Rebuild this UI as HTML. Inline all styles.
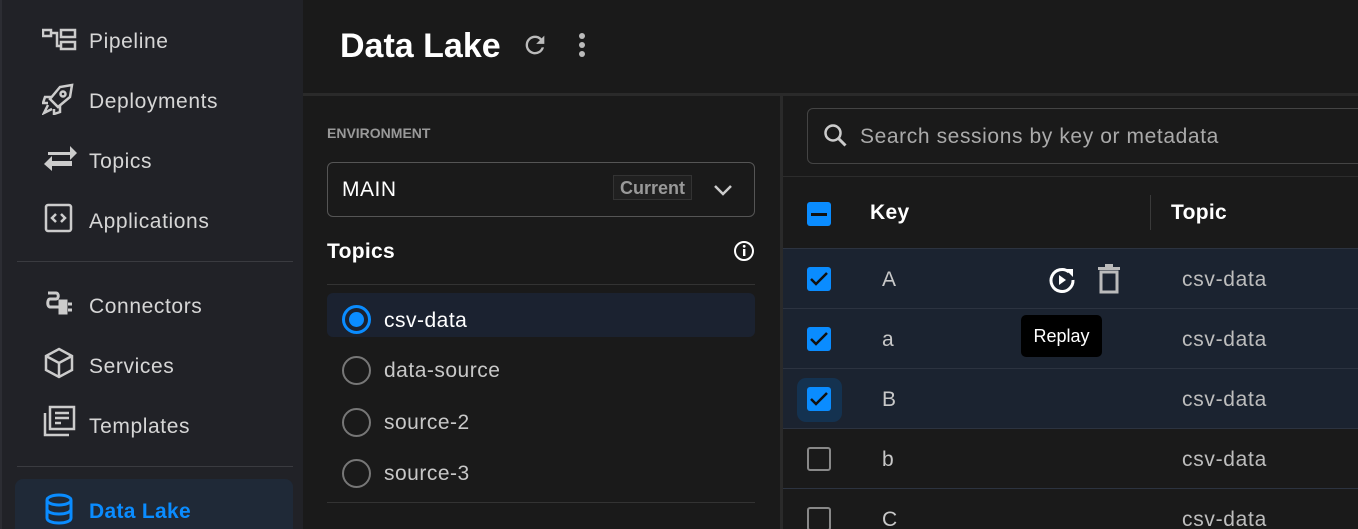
<!DOCTYPE html>
<html><head><style>
*{margin:0;padding:0;box-sizing:border-box}
html{overflow:hidden;width:1358px;height:529px}
body{width:1358px;height:529px;overflow:hidden;background:#1a1a1a;font-family:"Liberation Sans",sans-serif;position:relative;color:#ddd}
.a{position:absolute}
.side{left:0;top:0;width:303px;height:529px;background:#212227;border-left:2px solid #2c2d33}
.nav{position:absolute;left:87px;font-size:21px;letter-spacing:.6px;color:#d6d6d6;line-height:24px;margin-top:2px}
.ic{position:absolute;left:40px}
.sep{position:absolute;left:15px;width:276px;height:1px;background:#3a3b40}
.radio{position:absolute;left:342px;width:29px;height:29px;border-radius:50%;border:2.5px solid #777}
.rt{position:absolute;left:384px;font-size:21px;letter-spacing:.5px;color:#c8c8c8;line-height:24px;margin-top:1px}
.cb{position:absolute;left:807px;width:24px;height:24px;border-radius:3px}
.cb.on{background:#0a8cff}
.cb.off{border:2.5px solid #888;width:24px;height:24px}
.row{position:absolute;left:783px;width:575px;height:60px;border-bottom:1px solid #2c3340}
.k{position:absolute;left:882px;font-size:21px;color:#c8c8c8;margin-top:1px}
.t{position:absolute;left:1182px;font-size:21px;letter-spacing:.7px;color:#bdbdbd;margin-top:1px}
</style></head><body>
<div class="a side">
 <svg class="ic" style="top:28px" width="36" height="24" viewBox="0 0 36 24" fill="none" stroke="#ccc" stroke-width="2.5"><rect x="1" y="2" width="8" height="6"/><rect x="19" y="2" width="14" height="7"/><rect x="19" y="14" width="14" height="7"/><path d="M9 5h6v13h4"/></svg>
 <div class="nav" style="top:28px">Pipeline</div>
 <svg class="ic" style="top:83px" width="34" height="32" viewBox="0 0 34 32" fill="none" stroke="#ccc" stroke-width="2.5"><path d="M30 2 L18 4 L8 16 L16 24 L28 14 Z"/><circle cx="21" cy="11" r="2.5"/><path d="M10 14 L3 14 L1 20 L6 20"/><path d="M18 22 L18 29 L12 31 L12 26"/><path d="M6 22 L2 30 L10 26"/></svg>
 <div class="nav" style="top:88px">Deployments</div>
 <svg class="ic" style="top:144px" width="36" height="28" viewBox="0 0 36 28" fill="#ccc"><path d="M6 8h22v-6l7 7-7 7v-5H6z"/><path d="M30 17H10v-5l-8 8 8 7v-5h20z"/></svg>
 <div class="nav" style="top:148px">Topics</div>
 <svg class="ic" style="top:203px" width="32" height="30" viewBox="0 0 32 30" fill="none" stroke="#ccc" stroke-width="2.5"><rect x="4" y="2" width="25" height="26" rx="2"/><path d="M14 11l-4 4 4 4M19 11l4 4-4 4"/></svg>
 <div class="nav" style="top:208px">Applications</div>
 <div class="sep" style="top:261px"></div>
 <svg class="ic" style="top:289px" width="32" height="28" viewBox="0 0 32 28" fill="none" stroke="#ccc" stroke-width="3"><path d="M6 4h8c3 0 3 6 0 6H8c-3 0-3 8 0 8h10"/><rect x="18" y="12" width="6" height="12" fill="#ccc"/><path d="M26 15h4M26 21h4"/></svg>
 <div class="nav" style="top:293px">Connectors</div>
 <svg class="ic" style="top:347px" width="32" height="32" viewBox="0 0 32 32" fill="none" stroke="#ccc" stroke-width="2.5"><path d="M17 2L30 9v14L17 30 4 23V9z"/><path d="M4 9l13 7 13-7M17 16v14"/></svg>
 <div class="nav" style="top:353px">Services</div>
 <svg class="ic" style="top:405px" width="34" height="32" viewBox="0 0 34 32" fill="none" stroke="#ccc" stroke-width="2.5"><rect x="8" y="2" width="24" height="22"/><path d="M3 8v22h24"/><path d="M13 8h14M13 13h14M13 18h6"/></svg>
 <div class="nav" style="top:413px">Templates</div>
 <div class="sep" style="top:466px"></div>
 <div class="a" style="left:13px;top:479px;width:278px;height:60px;background:#1f2937;border-radius:8px"></div>
 <svg class="ic" style="top:492px" width="32" height="34" viewBox="0 0 32 34" fill="none" stroke="#0a8cff" stroke-width="3"><ellipse cx="17" cy="8" rx="12" ry="5"/><path d="M5 8v18c0 3 5 5 12 5s12-2 12-5V8M5 17c0 3 5 5 12 5s12-2 12-5"/></svg>
 <div class="nav" style="top:498px;color:#0a8cff;font-weight:bold;letter-spacing:.3px">Data Lake</div>
</div>
<div class="a" style="left:303px;top:93px;width:1055px;height:3px;background:#2a2a2a"></div>
<div class="a" style="left:340px;top:27px;font-size:34px;font-weight:bold;color:#fff">Data Lake</div>
<svg class="a" style="left:521px;top:31px" width="28" height="28" viewBox="0 0 24 24"><path fill="#bbb" d="M17.65 6.350A7.96 7.96 0 0 0 12 4a8 8 0 1 0 7.730 10h-2.080A6 6 0 1 1 12 6c1.660 0 3.140.69 4.220 1.780L13 11h7V4z"/></svg>
<svg class="a" style="left:576px;top:31px" width="12" height="28"><circle cx="6" cy="5" r="3" fill="#bbb"/><circle cx="6" cy="14" r="3" fill="#bbb"/><circle cx="6" cy="23" r="3" fill="#bbb"/></svg>
<div class="a" style="left:780px;top:96px;width:3px;height:433px;background:#2a2a2a"></div>
<div class="a" style="left:327px;top:125px;font-size:14px;font-weight:bold;color:#999">ENVIRONMENT</div>
<div class="a" style="left:327px;top:162px;width:428px;height:55px;border:1px solid #555;border-radius:6px"></div>
<div class="a" style="left:342px;top:178px;font-size:21px;letter-spacing:.5px;color:#fff">MAIN</div>
<div class="a" style="left:613px;top:175px;width:79px;height:25px;background:#202020;border:1px solid #333;color:#999;font-size:18px;font-weight:bold;text-align:center;line-height:25px">Current</div>
<svg class="a" style="left:712px;top:182px" width="22" height="16"><path d="M3 4l8 8 8-8" stroke="#ccc" stroke-width="2.5" fill="none"/></svg>
<div class="a" style="left:327px;top:240px;font-size:21px;letter-spacing:.3px;font-weight:bold;color:#fff">Topics</div>
<svg class="a" style="left:733px;top:240px" width="22" height="22" viewBox="0 0 22 22"><circle cx="11" cy="11" r="9" stroke="#fff" stroke-width="2" fill="none"/><rect x="10" y="9" width="2.4" height="7" fill="#fff"/><circle cx="11.2" cy="6.3" r="1.4" fill="#fff"/></svg>
<div class="a" style="left:327px;top:284px;width:428px;height:1px;background:#333"></div>
<div class="a" style="left:327px;top:293px;width:428px;height:44px;background:#1b2230;border-radius:6px"></div>
<div class="radio" style="top:305px;border-color:#0a8cff;border-width:3px"><div style="position:absolute;left:4px;top:4px;width:15px;height:15px;border-radius:50%;background:#0a8cff"></div></div>
<div class="rt" style="top:308px;color:#fff">csv-data</div>
<div class="radio" style="top:356px"></div><div class="rt" style="top:358px">data-source</div>
<div class="radio" style="top:408px"></div><div class="rt" style="top:410px">source-2</div>
<div class="radio" style="top:459px"></div><div class="rt" style="top:461px">source-3</div>
<div class="a" style="left:327px;top:502px;width:428px;height:1px;background:#333"></div>
<div class="a" style="left:807px;top:108px;width:560px;height:56px;border:1px solid #444;border-radius:6px"></div>
<svg class="a" style="left:822px;top:122px" width="28" height="28" viewBox="0 0 28 28"><circle cx="11" cy="11" r="7.5" stroke="#ccc" stroke-width="2.5" fill="none"/><path d="M16.5 16.5l7 7" stroke="#ccc" stroke-width="3"/></svg>
<div class="a" style="left:860px;top:125px;font-size:21px;letter-spacing:.6px;color:#aaa">Search sessions by key or metadata</div>
<div class="a" style="left:783px;top:176px;width:575px;height:1px;background:#2c2c2c"></div>
<div class="row" style="top:177px;height:72px;background:#1a1a1a;border-bottom-color:#2c3340"></div>
<div class="cb on" style="top:202px"><div style="position:absolute;left:4px;top:11px;width:16px;height:2.5px;background:#111"></div></div>
<div class="a" style="left:870px;top:201px;font-size:21px;letter-spacing:.3px;font-weight:bold;color:#fff">Key</div>
<div class="a" style="left:1150px;top:195px;width:1px;height:35px;background:#3a3a3a"></div>
<div class="a" style="left:1171px;top:201px;font-size:21px;letter-spacing:.3px;font-weight:bold;color:#fff">Topic</div>
<div class="row" style="top:249px;background:#1b2330"></div>
<div class="row" style="top:309px;background:#1b2330"></div>
<div class="row" style="top:369px;background:#1b2330"></div>
<div class="row" style="top:429px"></div>
<div class="row" style="top:489px"></div>
<div class="a" style="left:797px;top:378px;width:45px;height:44px;border-radius:9px;background:#143250"></div>
<svg width="0" height="0" style="position:absolute"><defs><path id="ck" d="M4 12l5 5 11-11" stroke="#111" stroke-width="2.5" fill="none"/></defs></svg>
<div class="cb on" style="top:267px"><svg width="24" height="24"><use href="#ck"/></svg></div>
<div class="cb on" style="top:327px"><svg width="24" height="24"><use href="#ck"/></svg></div>
<div class="cb on" style="top:387px"><svg width="24" height="24"><use href="#ck"/></svg></div>
<div class="cb off" style="top:447px"></div>
<div class="cb off" style="top:507px"></div>
<div class="k" style="top:267px">A</div><div class="t" style="top:267px">csv-data</div>
<div class="k" style="top:327px">a</div><div class="t" style="top:327px">csv-data</div>
<div class="k" style="top:387px">B</div><div class="t" style="top:387px">csv-data</div>
<div class="k" style="top:447px">b</div><div class="t" style="top:447px">csv-data</div>
<div class="k" style="top:507px">C</div><div class="t" style="top:507px">csv-data</div>
<svg class="a" style="left:1047px;top:265px" width="30" height="30" viewBox="0 0 30 30"><path d="M22 7A11 11 0 1 0 26 15" stroke="#fff" stroke-width="3" fill="none"/><path d="M18 4h8v8z" fill="#fff"/><path d="M12 10l7 5-7 5z" fill="#fff"/></svg>
<svg class="a" style="left:1097px;top:264px" width="24" height="30" viewBox="0 0 24 30"><rect x="1" y="3" width="22" height="3" fill="#bbb"/><rect x="8" y="0" width="8" height="3" fill="#bbb"/><rect x="4" y="8" width="16" height="20" stroke="#bbb" stroke-width="3" fill="none"/></svg>
<div class="a" style="left:1021px;top:315px;width:81px;height:42px;background:#000;border-radius:5px;color:#fff;font-size:18px;text-align:center;line-height:42px">Replay</div>
</body></html>
